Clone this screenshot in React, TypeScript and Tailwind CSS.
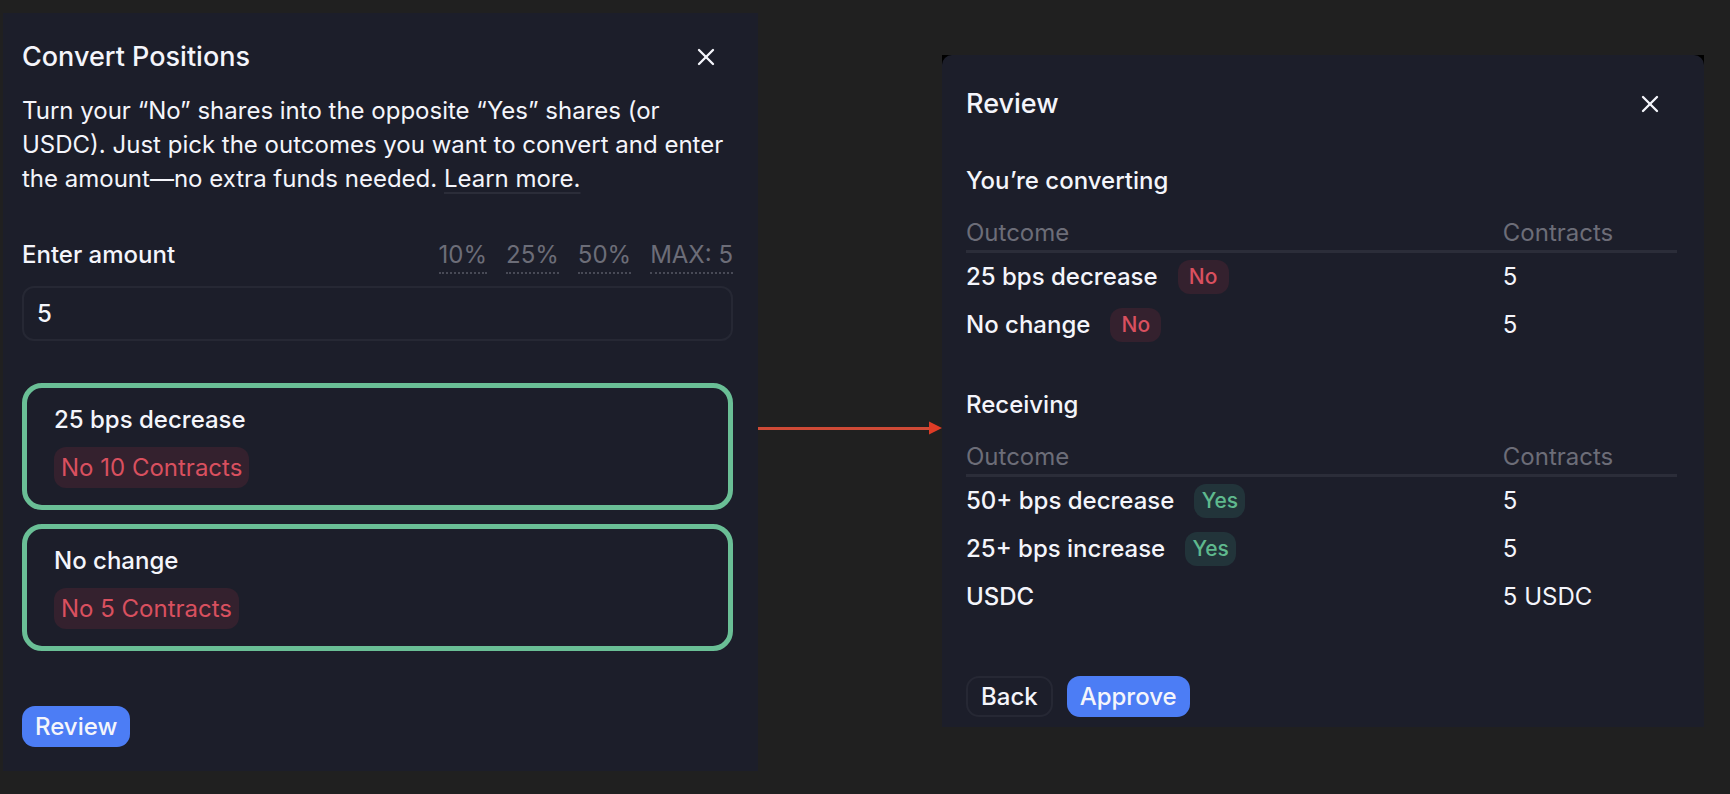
import { useState } from "react";
import { X } from "lucide-react";

const positions = [
  { name: "25 bps decrease", contracts: 10 },
  { name: "No change", contracts: 5 },
];

const converting = [
  { name: "25 bps decrease", side: "No", amount: "5" },
  { name: "No change", side: "No", amount: "5" },
];

const receiving = [
  { name: "50+ bps decrease", side: "Yes", amount: "5" },
  { name: "25+ bps increase", side: "Yes", amount: "5" },
  { name: "USDC", side: "", amount: "5 USDC" },
];

const PanelHeader = ({ title }: { title: string }) => (
  <div className="flex items-center justify-between pr-[13px]">
    <h2 className="text-[27px] leading-[34px] font-medium">{title}</h2>
    <button type="button" aria-label="Close">
      <X size={28} strokeWidth={2} />
    </button>
  </div>
);

const SideBadge = ({ side }: { side: string }) => (
  <span
    className={`flex h-[34px] w-[51px] items-center justify-center rounded-xl text-[21px] ${
      side === "Yes" ? "bg-[#22343a] text-[#5fb98e]" : "bg-[#34212e] text-[#d9505f]"
    }`}
  >
    {side}
  </span>
);

const OutcomeTable = ({ rows }: { rows: typeof converting }) => (
  <table className="mt-[18px] w-full table-fixed border-separate border-spacing-0 text-left">
    <thead>
      <tr className="text-[#6c6d78]">
        <th className="border-b-3 border-[#2b2d39] p-0 font-normal">Outcome</th>
        <th className="w-[24.5%] border-b-3 border-[#2b2d39] p-0 font-normal">
          Contracts
        </th>
      </tr>
    </thead>
    <tbody>
      {rows.map((row) => (
        <tr key={row.name} className="h-12">
          <td className="p-0 font-medium">
            <div className="flex items-center gap-5">
              {row.name}
              {row.side && <SideBadge side={row.side} />}
            </div>
          </td>
          <td className="p-0">{row.amount}</td>
        </tr>
      ))}
    </tbody>
  </table>
);

const ConvertPanel = () => {
  const [amount, setAmount] = useState("5");

  return (
    <section className="bg-[#1c1e2a] pt-[27px] pr-[25px] pb-6 pl-[19px]">
      <PanelHeader title="Convert Positions" />
      <p className="mt-5">
        Turn your “No” shares into the opposite “Yes” shares (or USDC). Just pick the
        outcomes you want to convert and enter the amount—no extra funds needed.{" "}
        <a
          href="#"
          className="underline decoration-[#2b2d39] decoration-2 underline-offset-[5px]"
        >
          Learn more.
        </a>
      </p>

      <div className="mt-[42px] flex items-start justify-between">
        <label htmlFor="amount" className="font-medium">
          Enter amount
        </label>
        <div className="flex gap-[19px] text-[#6c6d78]">
          {["10%", "25%", "50%", "MAX: 5"].map((preset) => (
            <button
              key={preset}
              type="button"
              className="border-b-2 border-dotted border-[#484a56]"
            >
              {preset}
            </button>
          ))}
        </div>
      </div>
      <input
        id="amount"
        type="text"
        value={amount}
        onChange={(e) => setAmount(e.target.value)}
        className="mt-3 block h-[55px] w-full rounded-xl border-2 border-[#262834] bg-transparent px-[13px] font-medium outline-none"
      />

      <div className="mt-[42px] flex flex-col gap-[14px]">
        {positions.map((position) => (
          <button
            key={position.name}
            type="button"
            className="flex flex-col items-start gap-[10px] rounded-[20px] border-5 border-[#6abf96] px-[27px] pt-[15px] pb-[17px]"
          >
            <span className="font-medium">{position.name}</span>
            <span className="flex h-[41px] items-center rounded-xl bg-[#34212e] px-[7px] text-[#d9505f]">
              No {position.contracts} Contracts
            </span>
          </button>
        ))}
      </div>

      <button
        type="button"
        className="mt-[55px] h-[41px] rounded-[13px] bg-[#4c7df5] px-[13px] font-medium"
      >
        Review
      </button>
    </section>
  );
};

const ReviewPanel = () => (
  <div className="mt-[42px] bg-black">
    <section className="rounded-t-[10px] bg-[#1c1e2a] pt-8 pr-[27px] pb-[10px] pl-6">
      <PanelHeader title="Review" />
      <h3 className="mt-[43px] font-medium">You’re converting</h3>
      <OutcomeTable rows={converting} />
      <h3 className="mt-[39px] font-medium">Receiving</h3>
      <OutcomeTable rows={receiving} />
      <div className="mt-[55px] flex gap-[14px]">
        <button
          type="button"
          className="h-[41px] rounded-[13px] border-2 border-[#262834] px-[13px] font-medium"
        >
          Back
        </button>
        <button
          type="button"
          className="h-[41px] rounded-[13px] bg-[#4c7df5] px-[13px] font-medium"
        >
          Approve
        </button>
      </div>
    </section>
  </div>
);

const FlowArrow = () => (
  <div className="mt-[408px] flex items-center">
    <div className="h-[3px] flex-1 bg-[#cf4a36]" />
    <svg className="h-[14px] w-[13px]" viewBox="0 0 13 14" aria-hidden="true">
      <path d="M0 0.5L13 7L0 13.5Z" fill="#de3c26" />
    </svg>
  </div>
);

const App = () => {
  return (
    <main className="grid min-h-screen grid-cols-[755fr_184fr_762fr] items-start bg-[#202020] pt-[13px] pr-[26px] pl-[3px] font-['Inter',sans-serif] text-[24px] leading-[34px] text-[#f4f5fb]">
      <ConvertPanel />
      <FlowArrow />
      <ReviewPanel />
    </main>
  );
};

export default App;
